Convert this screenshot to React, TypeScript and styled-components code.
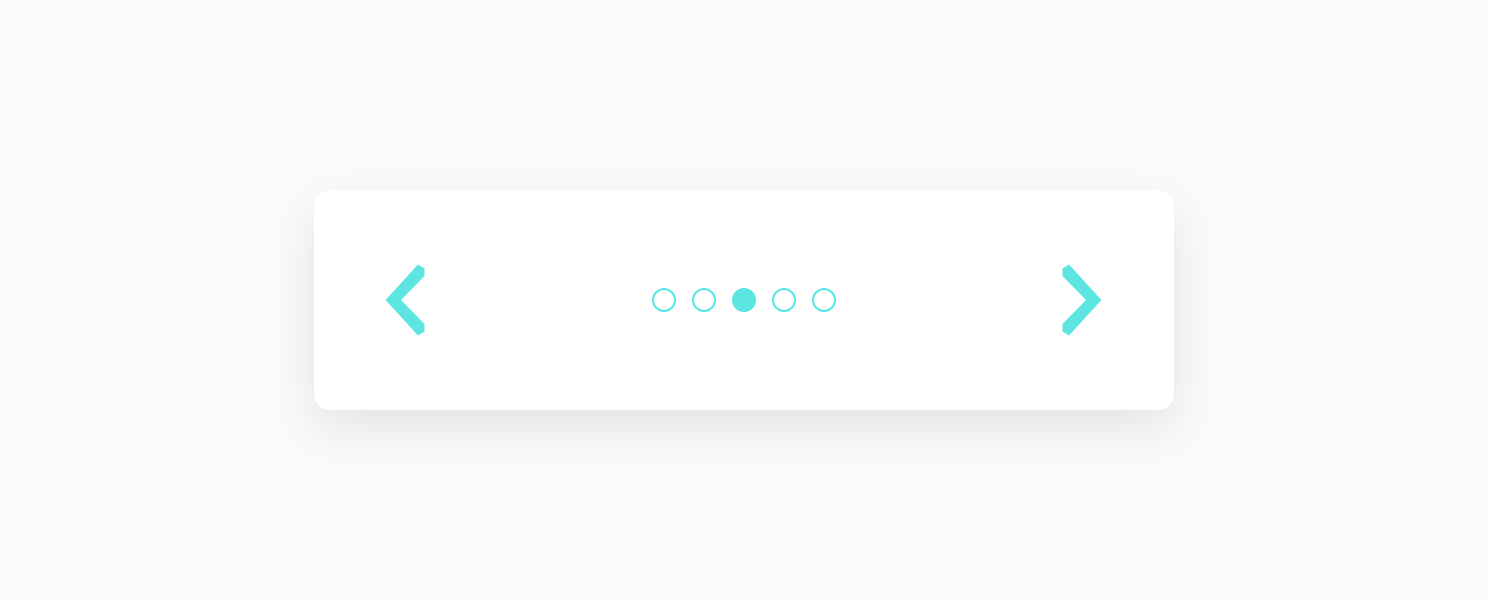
import { FC, useState } from 'react';
import styled, { createGlobalStyle } from 'styled-components';

const accent = '#5ce6e2';

const GlobalStyle = createGlobalStyle`
   html, body {
      margin: 0;
      padding: 0;
      background: #fafafa;
      font-family: "Open Sans", sans-serif;
   }
`;

const Page = styled.div`
   height: 600px;
   display: flex;
   align-items: center;
   justify-content: center;
`;

const Card = styled.div`
   width: 860px;
   height: 220px;
   box-sizing: border-box;
   padding: 0 72px 0 71px;
   background: #fff;
   border-radius: 16px;
   box-shadow: 0 18px 48px rgba(0, 0, 0, 0.09);
   display: flex;
   align-items: center;
   justify-content: space-between;
`;

const Arrow = styled.button`
   border: 0;
   padding: 0;
   background: none;
   cursor: pointer;
   display: flex;
   width: 40px;
   height: 72px;
`;

const Dots = styled.div`
   display: flex;
   gap: 16px;
`;

const Dot = styled.button<{ $active: boolean }>`
   width: 24px;
   height: 24px;
   padding: 0;
   border-radius: 50%;
   box-sizing: border-box;
   border: 2px solid ${accent};
   background: ${(p) => (p.$active ? accent : 'transparent')};
   cursor: pointer;
`;

// chevron drawn as a filled shape so the cut ends match
const Chevron: FC<{ dir: 'left' | 'right' }> = ({ dir }) => (
   <svg width="40" height="72" viewBox="0 0 40 72">
      <polygon
         fill={accent}
         transform={dir === 'right' ? 'translate(40 0) scale(-1 1)' : undefined}
         points="0.5,36 33,0.5 39.5,4.5 39.5,12 16,36 39.5,60 39.5,67.5 33,71.5"
      />
   </svg>
);

const App: FC = () => {
   const [index, setIndex] = useState(2);
   const count = 5;

   return (
      <Page>
         <GlobalStyle />
         <Card>
            <Arrow aria-label="Previous" onClick={() => setIndex((index + count - 1) % count)}>
               <Chevron dir="left" />
            </Arrow>
            <Dots>
               {Array.from({ length: count }).map((_, i) => (
                  <Dot key={i} $active={i === index} onClick={() => setIndex(i)} />
               ))}
            </Dots>
            <Arrow aria-label="Next" onClick={() => setIndex((index + 1) % count)}>
               <Chevron dir="right" />
            </Arrow>
         </Card>
      </Page>
   );
};

export default App;
